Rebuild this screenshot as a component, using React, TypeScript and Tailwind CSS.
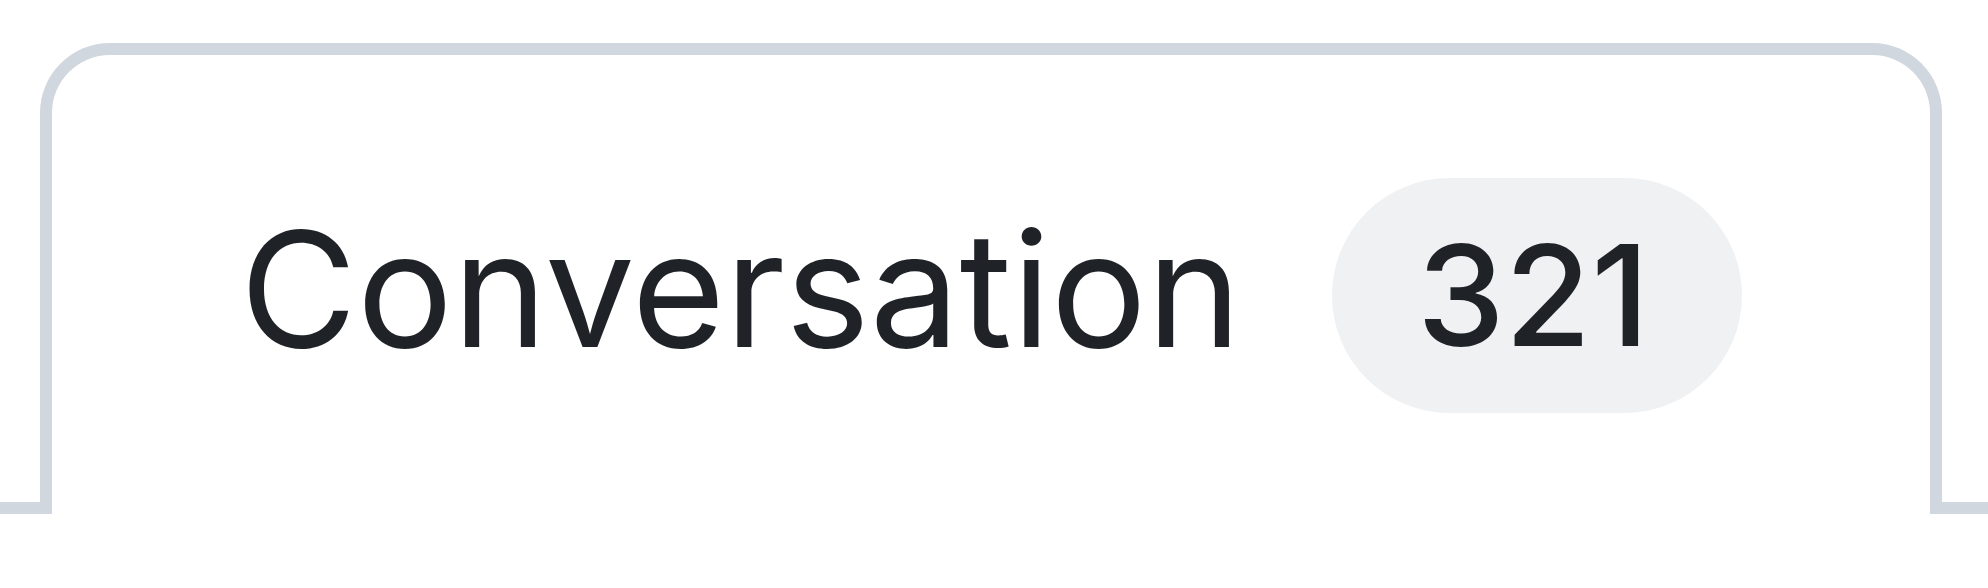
export default function App() {
  return (
    <main className="min-h-screen bg-white pt-[43px] font-['Inter',sans-serif] text-[#1f2328]">
      <nav aria-label="Pull request" className="flex items-end">
        <div className="w-10 border-b-[12px] border-[#d1d7de]" />
        <a
          href="#conversation"
          aria-current="page"
          className="flex h-[471px] flex-1 items-center rounded-t-[70px] border-x-[12px] border-t-[12px] border-[#d1d7de] bg-white pl-[188px] pt-[21px]"
        >
          <span className="pb-3 text-[160px] leading-none font-[430]">Conversation</span>
          <span className="ml-[91px] flex h-[235px] w-[410px] items-center justify-center rounded-full bg-[#eff1f3] pr-2 text-[140px] leading-none font-[550]">
            321
          </span>
        </a>
        <div className="w-[46px] border-b-[12px] border-[#d1d7de]" />
      </nav>
    </main>
  );
}
